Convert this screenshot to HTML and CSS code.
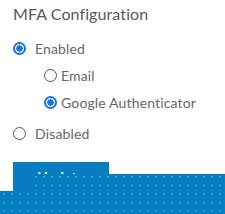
FILE: index.html
```html
<!DOCTYPE html>
<html>
<head>
<meta charset="utf-8">
<link rel="stylesheet" href="styles.css">
</head>
<body>
<div class="panel">
  <h2 class="title">MFA Configuration</h2>
  <label class="opt"><input type="radio" name="mfa" checked><span>Enabled</span></label>
  <div class="sub">
    <label class="opt"><input type="radio" name="type"><span>Email</span></label>
    <label class="opt"><input type="radio" name="type" checked><span>Google Authenticator</span></label>
  </div>
  <label class="opt opt-last"><input type="radio" name="mfa"><span>Disabled</span></label>
  <button class="btn">Update</button>
</div>
<div class="overlay"><div class="overlay-top"></div><div class="overlay-bottom"></div></div>
</body>
</html>
```
FILE: styles.css
```css
html, body { margin: 0; padding: 0; background: #fff; overflow: hidden; }
body { width: 225px; height: 214px; position: relative; font-family: "Lato", "Open Sans", sans-serif; color: #666; }
.panel { padding: 3px 0 0 13px; display: flex; flex-direction: column; align-items: flex-start; }
.title { margin: 0 0 10px; font-size: 16px; font-weight: 400; color: #595959; line-height: 22px; letter-spacing: 0.1px; }
.opt { display: flex; align-items: center; font-size: 14px; line-height: 27px; height: 27px; letter-spacing: 0.15px; }
.opt input { appearance: none; -webkit-appearance: none; margin: 0 9px 0 0; width: 13px; height: 13px; border: 1px solid #555; border-radius: 50%; box-sizing: border-box; background: #fff; flex: none; }
.opt input:checked { border: 2px solid #1a73e8; background: radial-gradient(circle, #1a73e8 0 3px, #fff 3.4px); }
.sub { padding-left: 31px; display: flex; flex-direction: column; }
.sub .opt input { margin-right: 4px; }
.opt-last { margin-top: 4px; }
.btn { margin-top: 15px; width: 96px; background: #0a7dc2; color: #fff; border: 0; font-family: inherit; font-weight: 700; font-size: 14px; line-height: 17px; padding: 6px 0 21px; display: block; text-align: center; align-self: flex-start; letter-spacing: 0.3px; }
.overlay { position: absolute; left: 0; top: 174px; width: 225px; height: 40px; }
.overlay-top, .overlay-bottom { background-color: #0581c2; background-image: radial-gradient(circle at 1px 1px, rgba(120,185,230,0.6) 0.6px, transparent 0.9px); background-size: 8px 8.5px; background-position: 3px 2px; }
.overlay-top { margin-left: 32px; height: 17px; }
.overlay-bottom { height: 23px; }
```
